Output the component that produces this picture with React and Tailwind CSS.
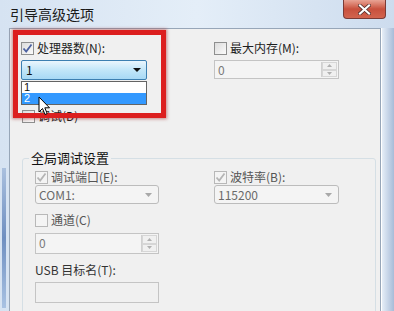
import React from "react";

const cjk = { fontFamily: '"Noto Sans CJK SC", "Liberation Sans", sans-serif' };
const sans = { fontFamily: '"Liberation Sans", "Noto Sans CJK SC", sans-serif' };

function Check({ checked, disabled }) {
  return (
    <div
      className={`w-[13px] h-[13px] border flex items-center justify-center shrink-0 ${
        disabled ? "border-[#b8b8b8] bg-[#f4f4f4]" : "border-[#8e8f8f] bg-gradient-to-br from-[#dcdcdc] to-[#fbfbfb]"
      }`}
    >
      {checked && (
        <svg width="11" height="11" viewBox="0 0 11 11">
          <path
            d="M1.5 5.5 L4.2 8.5 L9.5 1.5"
            fill="none"
            stroke={disabled ? "#b5b5b5" : "#4c61a0"}
            strokeWidth="1.8"
          />
        </svg>
      )}
    </div>
  );
}

function Label({ checked, disabled, children, dim }) {
  return (
    <div className="flex items-center gap-[3px] h-[14px]">
      <Check checked={checked} disabled={disabled} />
      <span className={`text-[12px] leading-[14px] ${dim ? "text-[#555]" : "text-[#1e1e1e]"}`} style={cjk}>
        {children}
      </span>
    </div>
  );
}

function DisabledCombo({ value, w = "w-[124px]" }) {
  return (
    <div className={`${w} h-[19px] rounded-[3px] border border-[#bcbcbc] bg-[#f4f4f4] flex items-center pl-[3px] pr-[6px]`}>
      <span className="text-[12px] text-[#6a6a6a] leading-none" style={cjk}>
        {value}
      </span>
      <svg className="ml-auto" width="7" height="4" viewBox="0 0 7 4">
        <path d="M0 0 H7 L3.5 4 Z" fill="#a8a8a8" />
      </svg>
    </div>
  );
}

function Spin({ value, w = "w-[124px]", h = "h-[19px]" }) {
  return (
    <div className={`${w} ${h} border border-[#c4c4c4] bg-[#f4f4f4] flex`}>
      <span className="text-[12px] text-[#7a7a7a] leading-none pl-[3px] pt-[3px] flex-1" style={cjk}>
        {value}
      </span>
      <div className="w-[16px] flex flex-col border-l border-[#d0d0d0] my-[1px] mr-[1px]">
        <div className="flex-1 flex items-center justify-center border border-[#d6d6d6] bg-[#f0f0f0]">
          <svg width="5" height="3" viewBox="0 0 5 3">
            <path d="M0 3 L2.5 0 L5 3 Z" fill="#b0b0b0" />
          </svg>
        </div>
        <div className="flex-1 flex items-center justify-center border border-[#d6d6d6] bg-[#f0f0f0]">
          <svg width="5" height="3" viewBox="0 0 5 3">
            <path d="M0 0 L2.5 3 L5 0 Z" fill="#b0b0b0" />
          </svg>
        </div>
      </div>
    </div>
  );
}

export default function App() {
  return (
    <div className="relative w-[394px] h-[311px] overflow-hidden bg-gradient-to-r from-[#d6e3f2] via-[#e4eef8] to-[#cddcee]">
      {/* Title bar */}
      <div className="h-[28px] flex items-start">
        <span className="pl-[10px] pt-[5px] text-[14px] text-[#1a1a1a] leading-[18px]" style={cjk}>
          引导高级选项
        </span>
        <div className="ml-auto mr-[8px] w-[43px] h-[19px] rounded-b-[4px] border border-t-0 border-[#7a3b36] bg-gradient-to-b from-[#e8a394] via-[#c8503d] to-[#d2644e] flex items-center justify-center">
          <svg width="13" height="11" viewBox="0 0 13 11">
            <path d="M2 1.5 L11 9.5 M11 1.5 L2 9.5" stroke="#4a2a28" strokeWidth="3.6" strokeLinecap="square" />
            <path d="M2 1.5 L11 9.5 M11 1.5 L2 9.5" stroke="#ffffff" strokeWidth="2.2" strokeLinecap="square" />
          </svg>
        </div>
      </div>

      {/* Body */}
      <div className="flex h-[283px]">
        <div className="w-[9px] flex justify-start pl-[2px] pt-[140px]">
          <div className="w-[4px] h-[140px] bg-gradient-to-b from-[#aac0de] via-[#6f8fc0] to-[#a9c2e2]" />
        </div>
        <div className="w-[372px] border-l border-t border-r border-[#97a6b8] bg-[#f0f0f0] pl-[11px] pt-[12px]">
          {/* top section */}
          <div className="flex">
            <div className="w-[126px] flex flex-col">
              <Label checked>处理器数(N):</Label>
              <div className="mt-[5px] w-[126px] h-[20px] rounded-[2px] border border-[#3c7fb1] bg-gradient-to-b from-[#eaf6fd] via-[#c2e6f9] to-[#a7d9f5] flex items-center pl-[4px] pr-[5px]">
                <span className="text-[12px] leading-none text-[#111]" style={cjk}>1</span>
                <svg className="ml-auto" width="8" height="4" viewBox="0 0 8 4">
                  <path d="M0 0 H8 L4 4 Z" fill="#111" />
                </svg>
              </div>
              <div className="mt-[29px] ml-[1px]">
                <Label>调试(D)</Label>
              </div>
            </div>
            <div className="ml-[67px] w-[125px] flex flex-col">
              <Label>最大内存(M):</Label>
              <div className="mt-[5px]">
                <Spin value="0" w="w-[125px]" />
              </div>
            </div>
          </div>

          {/* Group box */}
          <div className="relative mt-[35px] ml-[1px] w-[354px] h-[160px] border border-[#d5dfe5] rounded-[3px] pl-[12px] pt-[11px]">
            <span
              className="absolute left-[6px] top-[-9px] px-[2px] bg-[#f0f0f0] text-[13px] leading-[16px] text-[#111]"
              style={cjk}
            >
              全局调试设置
            </span>
            <div className="flex">
              <div className="w-[124px] flex flex-col">
                <Label checked disabled dim>调试端口(E):</Label>
                <div className="mt-[1px]">
                  <DisabledCombo value="COM1:" />
                </div>
                <div className="mt-[9px]">
                  <Label disabled dim>通道(C)</Label>
                </div>
                <div className="mt-[6px]">
                  <Spin value="0" w="w-[124px]" h="h-[21px]" />
                </div>
                <div className="mt-[9px] h-[14px] text-[12px] leading-[14px] text-[#333]" style={cjk}>
                  USB 目标名(T):
                </div>
                <div className="mt-[5px] w-[124px] h-[21px] border border-[#c4c4c4] bg-[#f0f0f0]" />
              </div>
              <div className="ml-[55px] w-[125px] flex flex-col">
                <Label checked disabled dim>波特率(B):</Label>
                <div className="mt-[1px]">
                  <DisabledCombo value="115200" w="w-[125px]" />
                </div>
              </div>
            </div>
          </div>
        </div>
        <div className="flex-1 border-l border-white bg-gradient-to-r from-[#e6eef7] to-[#a8bcd8]" />
      </div>

      {/* Red highlight */}
      <div className="absolute left-[13px] top-[30px] w-[153px] h-[88px] border-[5px] border-[#dc1f1f] shadow-[0_0_3px_1px_rgba(160,30,30,0.5)] pointer-events-none" />

      {/* Dropdown list */}
      <div className="absolute left-[21px] top-[81px] w-[126px] h-[24px] border border-[#646464] bg-white flex flex-col">
        <div className="h-[11px] text-[11px] leading-[11px] pl-[2px] text-[#111] overflow-hidden" style={sans}>1</div>
        <div className="h-[11px] bg-[#3399ff] text-[11px] leading-[11px] pl-[2px] text-white overflow-hidden" style={sans}>2</div>
      </div>

      {/* Mouse cursor */}
      <svg className="absolute left-[38px] top-[96px]" width="14" height="21" viewBox="0 0 14 21">
        <path
          d="M1 1 L1 16 L4.5 12.5 L7 18.5 L9.2 17.5 L6.8 11.8 L11.5 11.8 Z"
          fill="#ffffff"
          stroke="#000000"
          strokeWidth="1"
          strokeLinejoin="round"
        />
      </svg>
    </div>
  );
}
